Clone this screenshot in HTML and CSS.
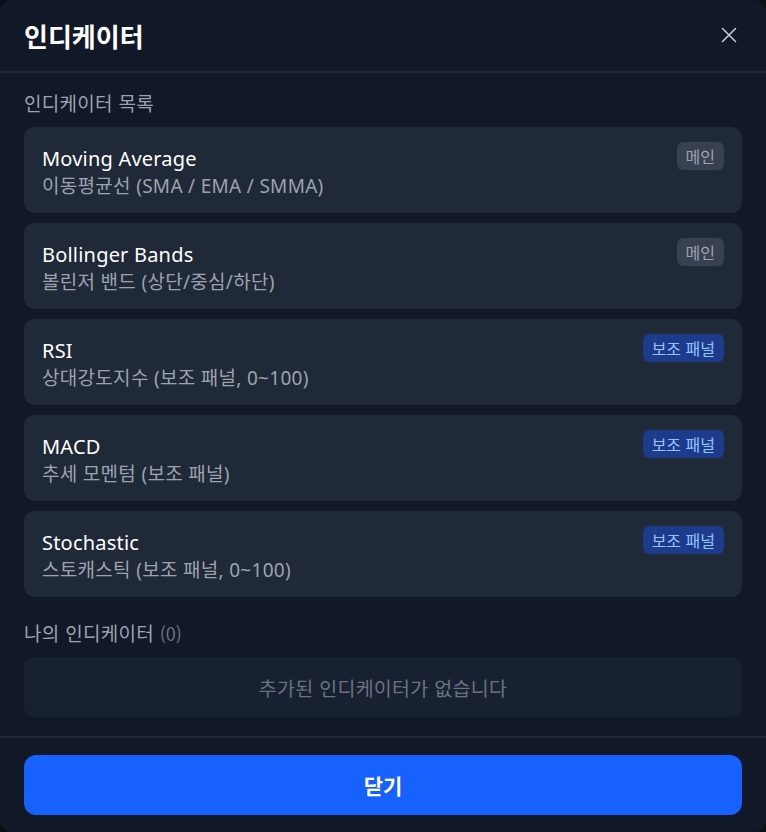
FILE: index.html
```html
<!DOCTYPE html>
<html lang="ko">
<head>
<meta charset="utf-8">
<link rel="stylesheet" href="styles.css">
</head>
<body>
<div class="modal">
  <header class="modal-header">
    <h1 class="modal-title">인디케이터</h1>
    <button class="close-btn" aria-label="닫기">
      <svg width="16" height="16" viewBox="0 0 16 16"><path d="M1.5 1.5 L14.5 14.5 M14.5 1.5 L1.5 14.5" stroke="#c3c7cf" stroke-width="1.6" stroke-linecap="round"/></svg>
    </button>
  </header>
  <main class="modal-body">
    <div class="section-label">인디케이터 목록</div>
    <div class="list">
      <div class="card">
        <div class="card-text">
          <div class="card-title">Moving Average</div>
          <div class="card-desc">이동평균선 (SMA / EMA / SMMA)</div>
        </div>
        <span class="badge badge-main">메인</span>
      </div>
      <div class="card">
        <div class="card-text">
          <div class="card-title">Bollinger Bands</div>
          <div class="card-desc">볼린저 밴드 (상단/중심/하단)</div>
        </div>
        <span class="badge badge-main">메인</span>
      </div>
      <div class="card">
        <div class="card-text">
          <div class="card-title">RSI</div>
          <div class="card-desc">상대강도지수 (보조 패널, 0~100)</div>
        </div>
        <span class="badge badge-sub">보조 패널</span>
      </div>
      <div class="card">
        <div class="card-text">
          <div class="card-title">MACD</div>
          <div class="card-desc">추세 모멘텀 (보조 패널)</div>
        </div>
        <span class="badge badge-sub">보조 패널</span>
      </div>
      <div class="card">
        <div class="card-text">
          <div class="card-title">Stochastic</div>
          <div class="card-desc">스토캐스틱 (보조 패널, 0~100)</div>
        </div>
        <span class="badge badge-sub">보조 패널</span>
      </div>
    </div>
    <div class="section-label mine">나의 인디케이터 <span class="count">(0)</span></div>
    <div class="empty">추가된 인디케이터가 없습니다</div>
  </main>
  <footer class="modal-footer">
    <button class="primary-btn">닫기</button>
  </footer>
</div>
</body>
</html>
```
FILE: styles.css
```css
* { box-sizing: border-box; }
html, body { margin: 0; padding: 0; background: #0b0f18; }
body {
  font-family: "Noto Sans", "Noto Sans CJK KR", sans-serif;
  color: #f3f4f6;
}
.modal {
  width: 766px;
  height: 832px;
  background: #111827;
  border-radius: 12px;
  display: flex;
  flex-direction: column;
  overflow: hidden;
}
.modal-header {
  height: 73px;
  flex: none;
  display: flex;
  align-items: center;
  justify-content: space-between;
  padding: 0 29px 0 24px;
  border-bottom: 2px solid #1f2937;
}
.modal-title {
  margin: 0;
  font-family: "Noto Sans CJK KR", sans-serif;
  font-size: 26px;
  font-weight: 700;
  color: #ffffff;
  line-height: 1;
  padding-top: 1px;
}
.close-btn {
  background: none;
  border: 0;
  padding: 0;
  width: 16px;
  height: 16px;
  display: flex;
  cursor: pointer;
  margin-top: -1px;
}
.modal-body {
  flex: 1;
  padding: 18px 24px 18px;
  display: flex;
  flex-direction: column;
}
.section-label {
  font-family: "Noto Sans CJK KR", sans-serif;
  font-size: 19px;
  letter-spacing: 0.3px;
  line-height: 24px;
  color: #9ca3af;
  margin-bottom: 12px;
}
.section-label.mine { margin-top: 24px; }
.count { color: #6b7280; font-size: 18px; letter-spacing: 0; }
.list {
  display: flex;
  flex-direction: column;
  gap: 10px;
}
.card {
  background: #1f2937;
  border-radius: 10px;
  height: 86px;
  flex: none;
  padding: 17px 18px 14px;
  display: flex;
  justify-content: space-between;
  align-items: flex-start;
}
.card-title {
  font-size: 20px;
  line-height: 29px;
  color: #ffffff;
  letter-spacing: 0.2px;
}
.card-desc {
  font-size: 19px;
  letter-spacing: 0.3px;
  line-height: 26px;
  color: #9ca3af;
}
.badge {
  margin-top: -2px;
  height: 28px;
  padding: 0 9px;
  border-radius: 6px;
  font-family: "Noto Sans CJK KR", sans-serif;
  font-size: 16px;
  line-height: 28px;
  white-space: nowrap;
}
.badge-main { background: #374151; color: #9ca3af; }
.badge-sub { background: #1e3a8a; color: #93c5fd; }
.empty {
  height: 60px;
  flex: none;
  border-radius: 10px;
  background: #182131;
  display: flex;
  align-items: center;
  justify-content: center;
  font-family: "Noto Sans CJK KR", sans-serif;
  font-size: 19.5px;
  letter-spacing: 0.3px;
  color: #6b7280;
}
.modal-footer {
  flex: none;
  border-top: 2px solid #1f2937;
  padding: 17px 24px 17px;
}
.primary-btn {
  display: block;
  width: 100%;
  height: 60px;
  border: 0;
  border-radius: 12px;
  background: #1761ff;
  color: #ffffff;
  font-family: "Noto Sans CJK KR", sans-serif;
  font-size: 21px;
  font-weight: 700;
  cursor: pointer;
}
```
